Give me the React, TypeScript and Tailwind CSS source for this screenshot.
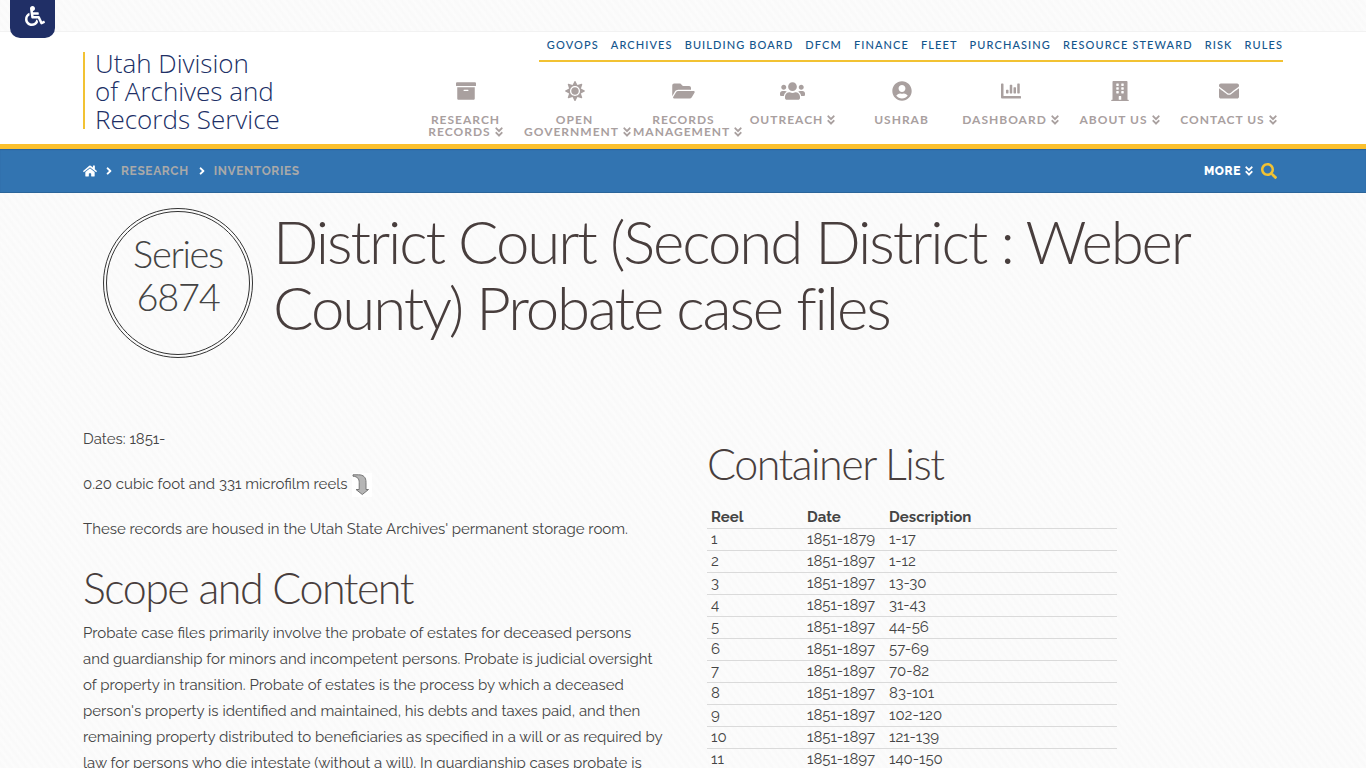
import {
  FaAngleDoubleDown,
  FaAngleRight,
  FaArchive,
  FaBuilding,
  FaChartBar,
  FaEnvelope,
  FaFolderOpen,
  FaHome,
  FaSearch,
  FaSun,
  FaUserCircle,
  FaUsers,
  FaWheelchair,
} from "react-icons/fa"

const agencies = [
  "GovOps",
  "Archives",
  "Building Board",
  "DFCM",
  "Finance",
  "Fleet",
  "Purchasing",
  "Resource Steward",
  "Risk",
  "Rules",
]

const menu = [
  { lines: ["Research", "Records"], icon: FaArchive, size: "w-5", more: true },
  { lines: ["Open", "Government"], icon: FaSun, size: "w-5", more: true },
  { lines: ["Records", "Management"], icon: FaFolderOpen, size: "w-[23px]", more: true },
  { lines: ["Outreach"], icon: FaUsers, size: "w-[25px]", more: true },
  { lines: ["USHRAB"], icon: FaUserCircle, size: "w-5", more: false },
  { lines: ["Dashboard"], icon: FaChartBar, size: "w-5", more: true },
  { lines: ["About Us"], icon: FaBuilding, size: "w-5", more: true },
  { lines: ["Contact Us"], icon: FaEnvelope, size: "w-5", more: true },
]

const reels = [
  ["1", "1851-1879", "1-17"],
  ["2", "1851-1897", "1-12"],
  ["3", "1851-1897", "13-30"],
  ["4", "1851-1897", "31-43"],
  ["5", "1851-1897", "44-56"],
  ["6", "1851-1897", "57-69"],
  ["7", "1851-1897", "70-82"],
  ["8", "1851-1897", "83-101"],
  ["9", "1851-1897", "102-120"],
  ["10", "1851-1897", "121-139"],
  ["11", "1851-1897", "140-150"],
]

function Header() {
  return (
    <header className="border-b-[5px] border-[#fbc02d] bg-white">
      <div className="mx-auto flex h-28 w-[88%] max-w-[1200px] justify-between">
        <a
          href="#"
          className="mt-5 h-[77px] border-l-2 border-[#f2c233] pl-[10px] font-['Open_Sans','Noto_Sans',sans-serif] text-[26px] font-light leading-[28px] whitespace-nowrap text-[#202f66]"
        >
          <span className="-mt-[3px] block">Utah Division</span>
          <span className="block">of Archives and</span>
          <span className="block">Records Service</span>
        </a>

        <div className="flex flex-col items-end">
          <nav
            aria-label="Agencies"
            className="flex h-[30px] gap-3 border-b-2 border-[#f2c233] pt-[5px] pl-2 text-[11px] leading-4 font-medium tracking-widest text-[#14568d] uppercase"
          >
            {agencies.map((name) => (
              <a key={name} href="#" className="whitespace-nowrap">
                {name}
              </a>
            ))}
          </nav>

          <nav aria-label="Main" className="mt-[19px] flex text-[12px] leading-3 font-bold tracking-[1px] text-[#a9a09f] uppercase">
            {menu.map(({ lines, icon: Icon, size, more }) => (
              <a key={lines.join(" ")} href="#" className="flex w-[109px] flex-col [align-items:safe_center] px-1">
                <span className="mb-[13px] flex self-center">
                  <Icon className={`h-5 ${size}`} />
                </span>
                {lines.map((line, i) => (
                  <span key={line} className="flex items-center gap-1 whitespace-nowrap">
                    {line}
                    {more && i === lines.length - 1 && <FaAngleDoubleDown className="h-3 w-2 shrink-0" />}
                  </span>
                ))}
              </a>
            ))}
          </nav>
        </div>
      </div>
    </header>
  )
}

function Breadcrumbs() {
  return (
    <div className="border-b border-[#2b659a] bg-[#3274b1] shadow-[inset_0_1px_1px_#28619a]">
      <div className="mx-auto flex h-[43px] w-[88%] max-w-[1200px] items-center justify-between font-['Raleway',sans-serif] text-[12px] font-bold tracking-wider text-white uppercase">
        <nav aria-label="Breadcrumb" className="flex items-center text-[#a9a9a9]">
          <a href="#" aria-label="Home">
            <FaHome className="size-[14px] text-white" />
          </a>
          <FaAngleRight className="mx-2 h-3 w-2 text-white" />
          <a href="#">Research</a>
          <FaAngleRight className="mr-2 ml-[9px] h-3 w-2 text-white" />
          <a href="#">Inventories</a>
        </nav>
        <div className="flex items-center pr-[6px]">
          <button type="button" className="flex items-center gap-1 font-extrabold tracking-wider uppercase">
            More
            <FaAngleDoubleDown className="h-3 w-2" />
          </button>
          <button type="button" aria-label="Search" className="ml-2 text-[#f2c233]">
            <FaSearch className="size-4" />
          </button>
        </div>
      </div>
    </div>
  )
}

function DownArrow() {
  return (
    <svg viewBox="0 0 20 24" className="ml-1 inline-block h-6 w-5 bg-white align-middle" aria-hidden="true">
      <path
        d="M1 1.8h5.5c5 0 7.5 2.5 7.5 7.5v7.2h2.5L10.3 21.5 4 16.5h3.2V9.6c0-3.7-1.5-6-6.2-6.4z"
        fill="#b5b5b5"
        stroke="#777"
      />
    </svg>
  )
}

function ContainerList() {
  return (
    <section>
      <h2 className="mt-3 text-[43px] leading-[52px] font-light tracking-[-0.035em] text-[#483e3d]">Container List</h2>
      <table className="mt-[17px] w-[410px] max-w-full table-fixed border-collapse font-['Raleway',sans-serif] text-[15px] leading-[21px]">
        <thead>
          <tr className="border-b border-[#dadada] text-left">
            <th className="w-[96px] p-0 pl-1 font-bold">Reel</th>
            <th className="w-[82px] p-0 pl-1 font-bold">Date</th>
            <th className="p-0 pl-1 font-bold">Description</th>
          </tr>
        </thead>
        <tbody>
          {reels.map((row) => (
            <tr key={row[0]} className="border-b border-[#dadada]">
              {row.map((cell) => (
                <td key={cell} className="p-0 pl-1">
                  {cell}
                </td>
              ))}
            </tr>
          ))}
        </tbody>
      </table>
    </section>
  )
}

export default function App() {
  return (
    <div className="h-screen overflow-hidden bg-[#fcfcfc] bg-[repeating-linear-gradient(52deg,#fcfcfc_0px,#f9f9f9_3px,#fcfcfc_6px)] font-['Lato',sans-serif] text-[#444]">
      <button
        type="button"
        aria-label="Accessibility"
        className="absolute top-0 left-[10px] flex h-[38px] w-[45px] items-start justify-center rounded-b-[10px] bg-[#202f66] pt-[6px] text-white"
      >
        <FaWheelchair className="ml-1 size-5" />
      </button>
      <div className="h-8 border-b border-[#f2f2f2]" />
      <Header />
      <Breadcrumbs />

      <main className="mx-auto w-[88%] max-w-[1200px]">
        <div className="flex h-[209px] pt-[15px]">
          <div className="ml-5 size-[150px] shrink-0 rounded-full border border-[#333] p-[2px]">
            <div className="h-full rounded-full border border-[#333] pt-5 text-center text-[38px] leading-[43px] font-light tracking-[-0.035em] text-[#444]">
              Series
              <br />
              6874
            </div>
          </div>
          <h1 className="ml-5 max-w-[940px] text-[60px] leading-[66px] font-light tracking-[-0.035em] text-[#483e3d]">
            District Court (Second District : Weber County) Probate case files
          </h1>
        </div>

        <div className="grid grid-cols-[580fr_576fr] gap-11 pt-6">
          <div className="font-['Raleway',sans-serif] text-[15px] leading-[26px]">
            <p className="mb-[19px]">Dates: 1851-</p>
            <p className="mb-[19px] h-[26px]">
              0.20 cubic foot and 331 microfilm reels
              <DownArrow />
            </p>
            <p>These records are housed in the Utah State Archives' permanent storage room.</p>
            <h2 className="mt-5 mb-[6px] font-['Lato',sans-serif] text-[43px] leading-[52px] font-light tracking-[-0.035em] text-[#483e3d]">
              Scope and Content
            </h2>
            <p>
              Probate case files primarily involve the probate of estates for deceased persons and&nbsp;guardianship for
              minors and incompetent persons. Probate is judicial oversight of property in transition. Probate of
              estates is the process by which a deceased person's property is identified and maintained, his debts and
              taxes paid, and then remaining property distributed to beneficiaries as specified in a will or as required
              by law for persons who die intestate (without a will). In guardianship cases probate is
            </p>
          </div>
          <ContainerList />
        </div>
      </main>
    </div>
  )
}
